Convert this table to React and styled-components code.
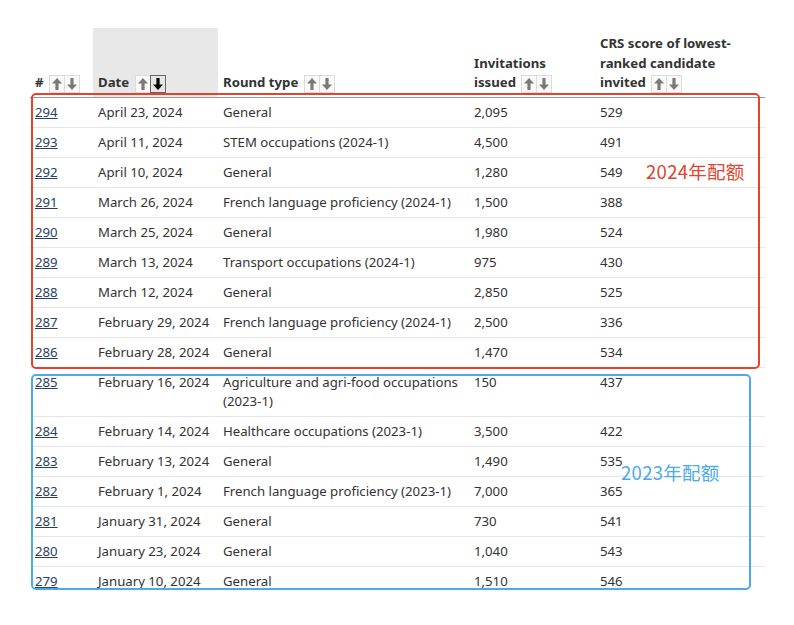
import styled, { createGlobalStyle } from "styled-components";

const GlobalStyle = createGlobalStyle`
  body {
    margin: 0;
    background: #fff;
    font-family: "Noto Sans", "Open Sans", sans-serif;
    color: #333;
  }
`;

const rounds = [
  { id: 294, date: "April 23, 2024", type: "General", issued: "2,095", crs: 529 },
  { id: 293, date: "April 11, 2024", type: "STEM occupations (2024-1)", issued: "4,500", crs: 491 },
  { id: 292, date: "April 10, 2024", type: "General", issued: "1,280", crs: 549 },
  { id: 291, date: "March 26, 2024", type: "French language proficiency (2024-1)", issued: "1,500", crs: 388 },
  { id: 290, date: "March 25, 2024", type: "General", issued: "1,980", crs: 524 },
  { id: 289, date: "March 13, 2024", type: "Transport occupations (2024-1)", issued: "975", crs: 430 },
  { id: 288, date: "March 12, 2024", type: "General", issued: "2,850", crs: 525 },
  { id: 287, date: "February 29, 2024", type: "French language proficiency (2024-1)", issued: "2,500", crs: 336 },
  { id: 286, date: "February 28, 2024", type: "General", issued: "1,470", crs: 534 },
  { id: 285, date: "February 16, 2024", type: "Agriculture and agri-food occupations (2023-1)", issued: "150", crs: 437 },
  { id: 284, date: "February 14, 2024", type: "Healthcare occupations (2023-1)", issued: "3,500", crs: 422 },
  { id: 283, date: "February 13, 2024", type: "General", issued: "1,490", crs: 535 },
  { id: 282, date: "February 1, 2024", type: "French language proficiency (2023-1)", issued: "7,000", crs: 365 },
  { id: 281, date: "January 31, 2024", type: "General", issued: "730", crs: 541 },
  { id: 280, date: "January 23, 2024", type: "General", issued: "1,040", crs: 543 },
  { id: 279, date: "January 10, 2024", type: "General", issued: "1,510", crs: 546 },
];

const Arrow = ({ down }) => (
  <svg width="10" height="12" viewBox="0 0 10 12" style={down ? { transform: "rotate(180deg)" } : undefined}>
    <polygon points="5,0 10,5.5 6.6,5.5 6.6,12 3.4,12 3.4,5.5 0,5.5" fill="currentColor" />
  </svg>
);

const SortButtons = ({ active }) => (
  <Sorts>
    <SortBtn>
      <Arrow />
    </SortBtn>
    <SortBtn active={active === "down"}>
      <Arrow down />
    </SortBtn>
  </Sorts>
);

export default function App() {
  return (
    <>
      <GlobalStyle />
      <Page>
        <Clip>
          <Table>
            <colgroup>
              <col style={{ width: 63 }} />
              <col style={{ width: 125 }} />
              <col style={{ width: 251 }} />
              <col style={{ width: 126 }} />
              <col style={{ width: 170 }} />
            </colgroup>
            <thead>
              <tr>
                <Th># <SortButtons /></Th>
                <Th sorted>Date <SortButtons active="down" /></Th>
                <Th>Round type <SortButtons /></Th>
                <Th>
                  Invitations
                  <br />
                  issued <SortButtons />
                </Th>
                <Th>
                  CRS score of lowest-
                  <br />
                  ranked candidate
                  <br />
                  invited <SortButtons />
                </Th>
              </tr>
            </thead>
            <tbody>
              {rounds.map((r) => (
                <tr key={r.id}>
                  <Td>
                    <NumLink href="#">{r.id}</NumLink>
                  </Td>
                  <Td>{r.date}</Td>
                  <Td>{r.type}</Td>
                  <Td>{r.issued}</Td>
                  <Td>{r.crs}</Td>
                </tr>
              ))}
            </tbody>
          </Table>
        </Clip>

        <Frame color="#e2432b" style={{ left: 31, top: 93, width: 729, height: 276 }} />
        <Label color="#e2432b" style={{ left: 646, top: 159 }}>2024年配额</Label>
        <Frame color="#4aaaeb" style={{ left: 31, top: 374, width: 720, height: 216 }} />
        <Label color="#4aaaeb" style={{ left: 621, top: 460 }}>2023年配额</Label>
      </Page>
    </>
  );
}

const Page = styled.div`
  position: relative;
  width: 794px;
  height: 625px;
  padding: 28px 0 0 30px;
  box-sizing: border-box;
`;

const Clip = styled.div`
  height: 560px;
  overflow: hidden;
`;

const Table = styled.table`
  width: 735px;
  table-layout: fixed;
  border-collapse: collapse;
  font-size: 13.2px;
  line-height: 19px;
`;

const Th = styled.th`
  text-align: left;
  vertical-align: bottom;
  font-weight: 700;
  line-height: 19.5px;
  padding: 6px 5px 4px;
  border-bottom: 1px solid #9a9a9a;
  background: ${(p) => (p.sorted ? "#e8e8e8" : "transparent")};
  white-space: nowrap;
`;

const Td = styled.td`
  vertical-align: top;
  padding: 5px;
  border-bottom: 1px solid #e6e6e6;
`;

const NumLink = styled.a`
  color: #284162;
  text-decoration: underline;
`;

const Sorts = styled.span`
  display: inline-flex;
  vertical-align: -3px;
  margin-left: 2px;
`;

const SortBtn = styled.span`
  display: inline-flex;
  align-items: center;
  justify-content: center;
  width: 14px;
  height: 16px;
  border: 1px solid ${(p) => (p.active ? "#666" : "#dcdcdc")};
  background: ${(p) => (p.active ? "#e6e6e6" : "#fafafa")};
  color: ${(p) => (p.active ? "#000" : "#7a7a7a")};
  & + & {
    margin-left: -1px;
  }
`;

const Frame = styled.div`
  position: absolute;
  box-sizing: border-box;
  border: 2.5px solid ${(p) => p.color};
  border-radius: 5px;
  pointer-events: none;
`;

const Label = styled.div`
  position: absolute;
  color: ${(p) => p.color};
  font-family: "Noto Sans CJK SC", "Noto Sans", sans-serif;
  font-size: 18.5px;
  line-height: 24px;
  letter-spacing: 0.3px;
  white-space: nowrap;
`;
